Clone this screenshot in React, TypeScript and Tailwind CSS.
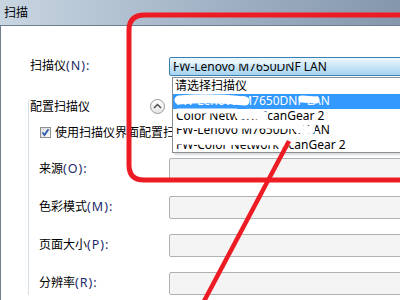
const FONT = { fontFamily: '"Noto Sans", "Noto Sans CJK SC", sans-serif' };

function FieldRow({ label, hotkey }: { label: string; hotkey: string }) {
  return (
    <div className="flex h-[23px] items-center">
      <div className="w-[140px] pl-[10px] text-[12px] text-black">
        {label}
        <span className="text-[12.5px] tracking-[1px] text-[#1c2a6a]">({hotkey}):</span>
      </div>
      <div className="h-[23px] w-[260px] rounded-[2px] border border-[#adb2b5] bg-[#f4f4f4]" />
    </div>
  );
}

function Checkbox() {
  return (
    <div className="flex h-[11px] w-[11px] items-center justify-center border border-[#8e8f8f] bg-gradient-to-br from-[#dcdcdc] to-[#fbfbfb]">
      <svg width="9" height="9" viewBox="0 0 9 9">
        <path d="M1.5 4.5 L3.5 7 L7.5 1.2" fill="none" stroke="#2c5aa8" strokeWidth="1.8" />
      </svg>
    </div>
  );
}

function ExpandIcon() {
  return (
    <div className="flex h-[15px] w-[15px] items-center justify-center rounded-full border border-[#9a9a9a] bg-gradient-to-b from-white to-[#e6e6e6]">
      <svg width="9" height="7" viewBox="0 0 9 7">
        <path d="M1 5 L4.5 1.6 L8 5" fill="none" stroke="#4a4a4a" strokeWidth="1.4" />
      </svg>
    </div>
  );
}

function DropList() {
  const rows = [
    "FW-Lenovo M7650DNF LAN",
    "Color Network ScanGear 2",
    "FW-Lenovo M7650DNF LAN",
    "FW-Color Network ScanGear 2",
  ];
  return (
    <div className="absolute left-[172px] top-[77px] w-[260px] border border-[#8a8f96] bg-white text-[12px] leading-[14px] shadow-[2px_2px_2px_rgba(0,0,0,0.15)]">
      <div className="flex h-[16px] items-center pl-[2px] text-black">请选择扫描仪</div>
      {rows.map((r, i) => (
        <div
          key={i}
          className={
            i === 0
              ? "flex h-[14.5px] items-center bg-[#3399ff] pl-[3px] text-white"
              : "flex h-[14.5px] items-center pl-[3px] text-black"
          }
        >
          {r}
        </div>
      ))}
    </div>
  );
}

function Annotations() {
  // 图上的手绘红框、红线和白色涂抹
  return (
    <svg className="pointer-events-none absolute left-0 top-0" width="400" height="300" viewBox="0 0 400 300">
      <g stroke="#ffffff" strokeLinecap="round" fill="none">
        <path d="M178 61 L288 61.5" stroke="#e9f5fc" strokeWidth="5" />
        <path d="M179 100 Q210 97 245 101" strokeWidth="9" />
        <path d="M302 99 L316 100" strokeWidth="7" />
        <path d="M178 111 L236 111" strokeWidth="5" />
        <path d="M240 115 Q252 112 263 116" strokeWidth="10" />
        <path d="M178 125 L300 126" strokeWidth="6" />
        <path d="M298 129 L311 130" strokeWidth="8" />
        <path d="M178 140 L290 141" strokeWidth="9" />
      </g>
      <path
        d="M145 15 L420 15 L420 180 L144 180 Q129 180 129 165 L129 30 Q129 15 145 15 Z"
        fill="none"
        stroke="#ed1c24"
        strokeWidth="5"
      />
      <path d="M289 141 L202 305" stroke="#ed1c24" strokeWidth="4.5" />
    </svg>
  );
}

export default function App() {
  return (
    <div className="relative h-[300px] w-[400px] overflow-hidden bg-white" style={FONT}>
      <div className="flex h-[25px] items-center bg-gradient-to-r from-[#c9d6e2] via-[#a3b4c6] to-[#8597ad] pl-[4px] text-[12px] text-black">
        扫描
      </div>
      <div className="flex h-[275px]">
        <div className="w-[3px] bg-gradient-to-b from-[#a9b9ca] to-[#8ea2b8]" />
        <div className="flex-1 border-l border-t border-[#6f7f8f] bg-white pt-[31px]">
          <div className="flex h-[19px] items-center">
            <div className="w-[168px] pl-[29px] text-[12px] text-black">
              扫描仪<span className="text-[12.5px] tracking-[1px] text-[#1c2a6a]">(N):</span>
            </div>
            <div className="h-[19px] w-[260px] overflow-hidden rounded-[2px] border border-[#3c7fb1] bg-gradient-to-b from-[#edf7fd] to-[#a4d3f0] pl-[3px] text-[12px] leading-[17px] text-black">
              FW-Lenovo M7650DNF LAN
            </div>
          </div>
          <div className="ml-[27px] mt-[26px] rounded-tl-[3px] border-l border-[#d5dfe5]">
            <div className="-mt-[3px] flex h-[15px] items-center pl-[1px]">
              <div className="w-[120px] text-[12px] text-black">配置扫描仪</div>
              <ExpandIcon />
            </div>
            <div className="mt-[13px] flex h-[11px] items-center pl-[11px]">
              <Checkbox />
              <div className="ml-[4px] whitespace-nowrap text-[12px] text-black">使用扫描仪界面配置扫描仪</div>
            </div>
            <div className="mt-[20px] flex flex-col gap-[15px]">
              <FieldRow label="来源" hotkey="O" />
              <FieldRow label="色彩模式" hotkey="M" />
              <FieldRow label="页面大小" hotkey="P" />
              <FieldRow label="分辨率" hotkey="R" />
            </div>
          </div>
        </div>
      </div>
      <DropList />
      <Annotations />
    </div>
  );
}
